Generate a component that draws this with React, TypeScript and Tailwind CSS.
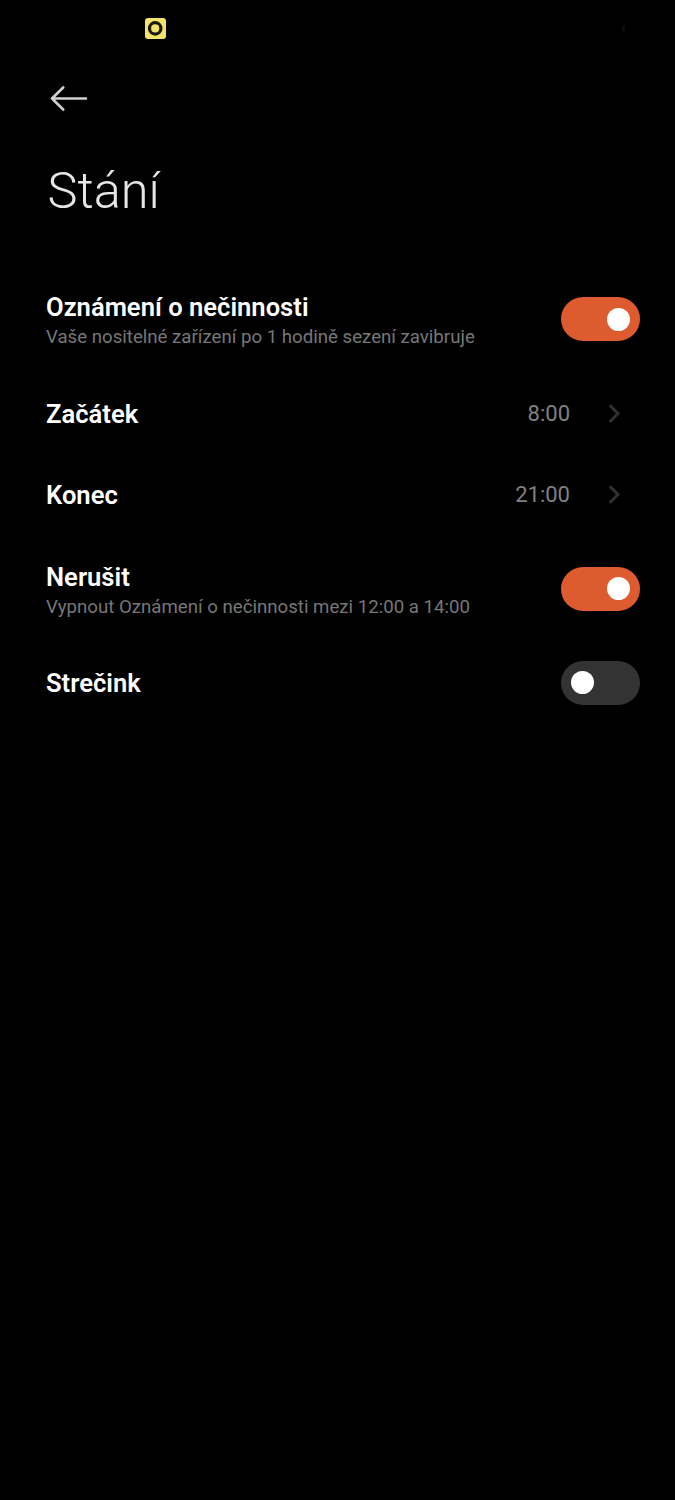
import { ReactNode } from "react";

interface SettingRowProps {
  title: string;
  description?: string;
  className: string;
  children: ReactNode;
}

function StatusBar() {
  return (
    <div className="flex h-[56px] items-center justify-between pr-[50px] pl-[145px]">
      <svg width="21" height="21" viewBox="0 0 21 21">
        <rect width="21" height="21" rx="3" fill="#f2e46a" />
        <circle cx="10.2" cy="10.4" r="5.7" fill="none" stroke="#1c190c" strokeWidth="3.2" />
      </svg>
      <span className="h-[7px] w-[3px] rounded-full bg-[#0c0c0c]" />
    </div>
  );
}

function Toggle({ checked }: { checked: boolean }) {
  return (
    <button
      role="switch"
      aria-checked={checked}
      className={`flex h-11 w-[79px] shrink-0 items-center rounded-full px-[10px] ${
        checked ? "justify-end bg-[#de5b30]" : "justify-start bg-[#333333]"
      }`}
    >
      <span className="size-[23px] rounded-full bg-white" />
    </button>
  );
}

function TimeValue({ value }: { value: string }) {
  return (
    <div className="flex items-center pr-[18px]">
      <span className="pt-px text-[22px] leading-[28px] text-[#808080]">{value}</span>
      <svg
        className="ml-[38px]"
        width="14"
        height="20"
        viewBox="0 0 14 20"
        fill="none"
        stroke="#303030"
        strokeWidth="3"
        strokeLinecap="round"
      >
        <path d="M2.5 2 L10 9.5 L2.5 17" />
      </svg>
    </div>
  );
}

function SettingRow({ title, description, className, children }: SettingRowProps) {
  return (
    <div className={`flex items-center justify-between pr-[35px] pl-[46px] ${className}`}>
      <div className={description ? "pt-[6px]" : ""}>
        <div className="text-[25.6px] leading-[30px] font-semibold text-white">{title}</div>
        {description && <div className="text-[18.65px] leading-[30px] text-[#777777]">{description}</div>}
      </div>
      {children}
    </div>
  );
}

export default function App() {
  return (
    <div className="h-[1500px] w-[675px] overflow-hidden bg-black font-['Roboto',sans-serif]">
      <StatusBar />
      <header>
        <button aria-label="Zpět" className="mt-[30px] ml-[50px] block">
          <svg
            width="38"
            height="26"
            viewBox="0 0 38 26"
            fill="none"
            stroke="#d0d0d0"
            strokeWidth="2.6"
            strokeLinecap="round"
            strokeLinejoin="round"
          >
            <path d="M13.2 1.5 L2 12.5 L13.2 23.5 M2 12.5 H36" />
          </svg>
        </button>
        <h1 className="mt-[49px] ml-[47.5px] text-[50.5px] leading-[60px] font-light text-[#e6e6e6]">Stání</h1>
      </header>
      <main className="mt-[44px]">
        <SettingRow
          className="h-[108px]"
          title="Oznámení o nečinnosti"
          description="Vaše nositelné zařízení po 1 hodině sezení zavibruje"
        >
          <Toggle checked />
        </SettingRow>
        <SettingRow className="h-[81px]" title="Začátek">
          <TimeValue value="8:00" />
        </SettingRow>
        <SettingRow className="h-[81px]" title="Konec">
          <TimeValue value="21:00" />
        </SettingRow>
        <SettingRow
          className="h-[107px]"
          title="Nerušit"
          description="Vypnout Oznámení o nečinnosti mezi 12:00 a 14:00"
        >
          <Toggle checked />
        </SettingRow>
        <SettingRow className="h-[81px]" title="Strečink">
          <Toggle checked={false} />
        </SettingRow>
      </main>
    </div>
  );
}
